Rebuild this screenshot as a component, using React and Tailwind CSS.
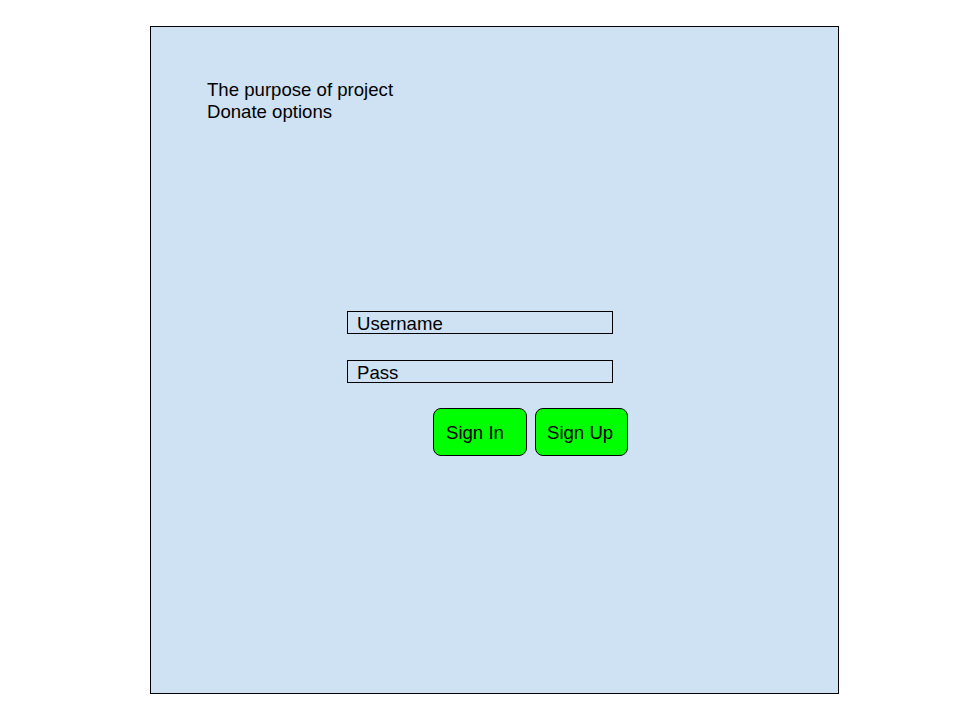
export default function App() {
  return (
    <div className="w-[960px] h-[720px] bg-white pt-[26px] pl-[150px] font-['Liberation_Sans',Arial,sans-serif] text-[18.6px] text-black">
      <div className="w-[689px] h-[668px] border border-black bg-[#cfe2f3] pt-[52px] pl-[56px]">
        {/* Intro text */}
        <div className="leading-[22px]">
          <p>The purpose of project</p>
          <p>Donate options</p>
        </div>

        {/* Login form */}
        <div className="ml-[140px] mt-[188px] flex flex-col">
          <div className="w-[266px] h-[23px] border border-black pl-[9px] leading-[23px]">Username</div>
          <div className="w-[266px] h-[23px] border border-black pl-[9px] leading-[23px] mt-[26px]">Pass</div>
          <div className="flex gap-[8px] mt-[25px] ml-[86px]">
            <button className="w-[94px] h-[48px] border border-black rounded-[8px] bg-[#00ff00] text-left pl-[12px] pt-[2px]">Sign In</button>
            <button className="w-[93px] h-[48px] border border-black rounded-[8px] bg-[#00ff00] text-left pl-[11px] pt-[2px]">Sign Up</button>
          </div>
        </div>
      </div>
    </div>
  )
}
